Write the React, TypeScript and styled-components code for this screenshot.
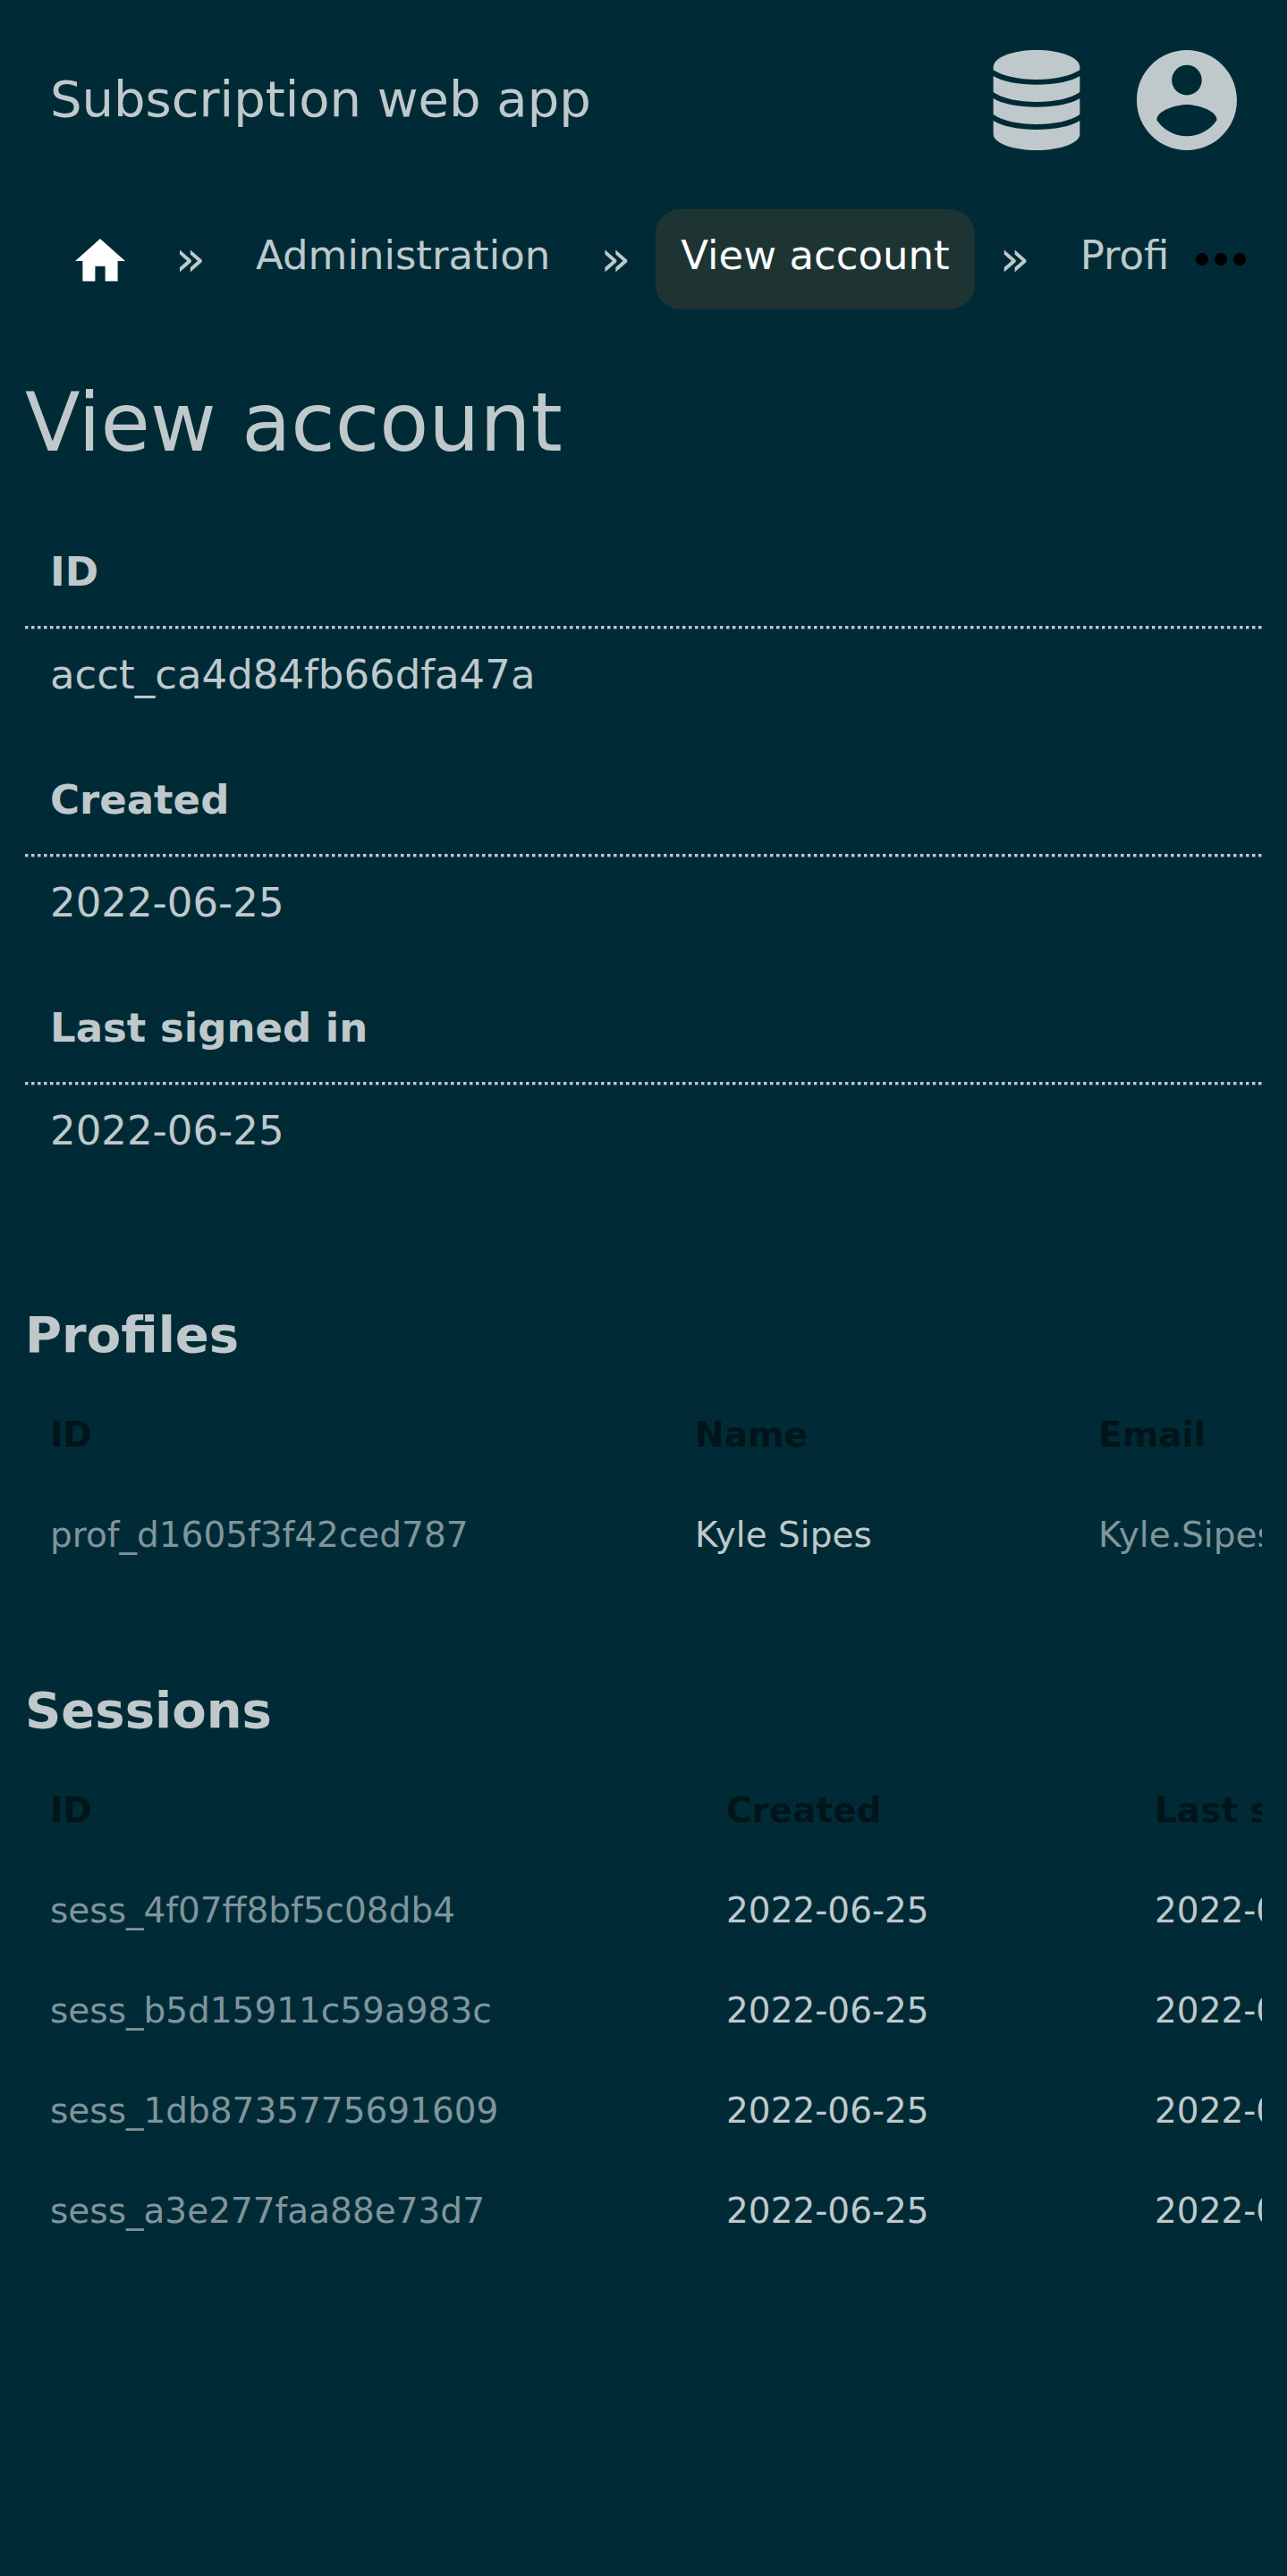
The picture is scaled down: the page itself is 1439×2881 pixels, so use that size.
import React from "react";
import styled, { createGlobalStyle, css } from "styled-components";

const GlobalStyle = createGlobalStyle`
  *, *::before, *::after { box-sizing: border-box; }
  html { background: #002b36; }
  body {
    margin: 0;
    background: #002b36;
    color: #bfc9cc;
    font-family: "DejaVu Sans", sans-serif;
    font-size: 45px;
    line-height: 56px;
  }
  h1, h2, dl, dd, ol { margin: 0; padding: 0; }
  a { color: inherit; text-decoration: none; }
`;

const Header = styled.header`
  display: flex;
  align-items: flex-start;
  justify-content: space-between;
  padding: 56px;
`;

const Brand = styled.a`
  font-size: 56px;
  line-height: 109px;
`;

const HeaderLinks = styled.nav`
  display: flex;
  gap: 56px;
`;

const IconLink = styled.a`
  display: block;
  width: 112px;
  height: 112px;

  svg {
    display: block;
    width: 100%;
    height: 100%;
    fill: currentColor;
  }
`;

const CrumbBar = styled.nav`
  display: flex;
  padding: 10px 28px 0 56px;
`;

const CrumbList = styled.ol`
  display: flex;
  flex: 1;
  min-width: 0;
  overflow: hidden;
  list-style: none;
  white-space: nowrap;
`;

const Crumb = styled.li`
  display: flex;
  flex: none;

  & + &::before {
    content: "»";
    width: 90px;
    font-size: 56px;
    line-height: 110px;
    text-align: center;
  }
`;

const CrumbLink = styled.a<{ $current?: boolean }>`
  height: 112px;
  padding: 0 28px;
  border-radius: 28px;
  line-height: 104px;
  ${(p) =>
    p.$current &&
    css`
      background: #1e3433;
      color: #fff;
    `}

  svg {
    display: block;
    width: 56px;
    height: 112px;
    fill: #fff;
  }
`;

const MoreButton = styled.button`
  flex: none;
  width: 104px;
  height: 112px;
  padding: 0 0 0 22px;
  border: 0;
  background: none;

  svg {
    display: block;
    width: 72px;
    height: 112px;
    fill: #000;
  }
`;

const Main = styled.main`
  padding: 0 28px;
`;

const Title = styled.h1`
  padding: 71px 0 55px;
  font-size: 90px;
  font-weight: 400;
  line-height: 112px;
`;

const Detail = styled.dl`
  padding-bottom: 88px;
`;

const Term = styled.dt`
  padding: 28px 28px 0;
  font-weight: 700;

  &::after {
    content: "";
    display: block;
    height: 4px;
    margin: 32px -28px 0;
    background:
      linear-gradient(transparent 3px, #002b36a0 3px),
      repeating-linear-gradient(
        90deg,
        #bfc9cc 0 3px,
        #bfc9cc80 3px 4px,
        transparent 4px 7px
      );
  }
`;

const Value = styled.dd`
  && {
    padding: 23px 28px 56px;
  }
`;

const Section = styled.section`
  padding-bottom: 84px;
`;

const SectionTitle = styled.h2`
  font-size: 56px;
  line-height: 112px;
`;

const TableScroll = styled.div`
  overflow: hidden;
`;

const Table = styled.table`
  width: max-content;
  min-width: 100%;
  border-collapse: collapse;
  table-layout: fixed;
  font-size: 39px;
  line-height: 56px;
  text-align: left;
  white-space: nowrap;
`;

const HeadCell = styled.th<{ $width: number }>`
  width: ${(p) => p.$width}px;
  padding: 28px;
  color: #00151a;
`;

const Cell = styled.td<{ $muted?: boolean }>`
  padding: 28px;
  color: ${(p) => (p.$muted ? "#80959b" : "#bfc9cc")};
`;

const DatabaseIcon = () => (
  <svg viewBox="0 0 336 336" aria-hidden="true">
    <path d="M23 58C23 24 88 0 168 0s145 24 145 58v9c-30 20-84 32-145 32S53 87 23 67z" />
    <path d="M23 87c30 19 84 29 145 29s115-10 145-29v54c-30 21-84 33-145 33S53 162 23 141z" />
    <path d="M23 162c30 19 84 29 145 29s115-10 145-29v54c-30 21-84 33-145 33S53 237 23 216z" />
    <path d="M23 237c30 19 84 30 145 30s115-11 145-30v45c0 30-65 54-145 54S23 312 23 282z" />
  </svg>
);

const AccountIcon = () => (
  <svg viewBox="2 2 20 20" aria-hidden="true">
    <path d="M12 2C6.48 2 2 6.48 2 12s4.48 10 10 10 10-4.48 10-10S17.52 2 12 2zm0 3c1.66 0 3 1.34 3 3s-1.34 3-3 3-3-1.34-3-3 1.34-3 3-3zm0 14.2c-2.5 0-4.71-1.28-6-3.22.03-1.99 4-3.08 6-3.08 1.99 0 5.97 1.09 6 3.08-1.29 1.94-3.5 3.22-6 3.22z" />
  </svg>
);

const HomeIcon = () => (
  <svg viewBox="2 -0.75 20 24" aria-hidden="true">
    <path d="M10 20v-6h4v6h5v-8h3L12 3 2 12h3v8z" />
  </svg>
);

const MoreIcon = () => (
  <svg viewBox="0 0 72 112" aria-hidden="true">
    <circle cx="15" cy="56" r="7" />
    <circle cx="36" cy="56" r="7" />
    <circle cx="57" cy="56" r="7" />
  </svg>
);

const details = [
  { term: "ID", value: "acct_ca4d84fb66dfa47a" },
  { term: "Created", value: "2022-06-25" },
  { term: "Last signed in", value: "2022-06-25" },
];

const sessions = [
  "sess_4f07ff8bf5c08db4",
  "sess_b5d15911c59a983c",
  "sess_1db8735775691609",
  "sess_a3e277faa88e73d7",
];

export default function App() {
  return (
    <>
      <GlobalStyle />
      <Header>
        <Brand href="#home">Subscription web app</Brand>
        <HeaderLinks aria-label="Menus">
          <IconLink href="#administration" aria-label="Administration">
            <DatabaseIcon />
          </IconLink>
          <IconLink href="#account" aria-label="Account">
            <AccountIcon />
          </IconLink>
        </HeaderLinks>
      </Header>
      <CrumbBar aria-label="Breadcrumb">
        <CrumbList>
          <Crumb>
            <CrumbLink href="#home" aria-label="Home">
              <HomeIcon />
            </CrumbLink>
          </Crumb>
          <Crumb>
            <CrumbLink href="#administration">Administration</CrumbLink>
          </Crumb>
          <Crumb>
            <CrumbLink href="#view" aria-current="page" $current>
              View account
            </CrumbLink>
          </Crumb>
          <Crumb>
            <CrumbLink href="#profiles">Profiles</CrumbLink>
          </Crumb>
        </CrumbList>
        <MoreButton type="button" aria-label="More">
          <MoreIcon />
        </MoreButton>
      </CrumbBar>
      <Main>
        <Title>View account</Title>
        <Detail>
          {details.map((d) => (
            <React.Fragment key={d.term}>
              <Term>{d.term}</Term>
              <Value>{d.value}</Value>
            </React.Fragment>
          ))}
        </Detail>
        <Section>
          <SectionTitle>Profiles</SectionTitle>
          <TableScroll>
            <Table>
              <thead>
                <tr>
                  <HeadCell $width={721}>ID</HeadCell>
                  <HeadCell $width={451}>Name</HeadCell>
                  <HeadCell $width={700}>Email</HeadCell>
                </tr>
              </thead>
              <tbody>
                <tr>
                  <Cell $muted>prof_d1605f3f42ced787</Cell>
                  <Cell>Kyle Sipes</Cell>
                  <Cell $muted>Kyle.Sipes@example.com</Cell>
                </tr>
              </tbody>
            </Table>
          </TableScroll>
        </Section>
        <Section>
          <SectionTitle>Sessions</SectionTitle>
          <TableScroll>
            <Table>
              <thead>
                <tr>
                  <HeadCell $width={756}>ID</HeadCell>
                  <HeadCell $width={479}>Created</HeadCell>
                  <HeadCell $width={479}>Last signed in</HeadCell>
                </tr>
              </thead>
              <tbody>
                {sessions.map((id) => (
                  <tr key={id}>
                    <Cell $muted>{id}</Cell>
                    <Cell>2022-06-25</Cell>
                    <Cell>2022-06-25</Cell>
                  </tr>
                ))}
              </tbody>
            </Table>
          </TableScroll>
        </Section>
      </Main>
    </>
  );
}
